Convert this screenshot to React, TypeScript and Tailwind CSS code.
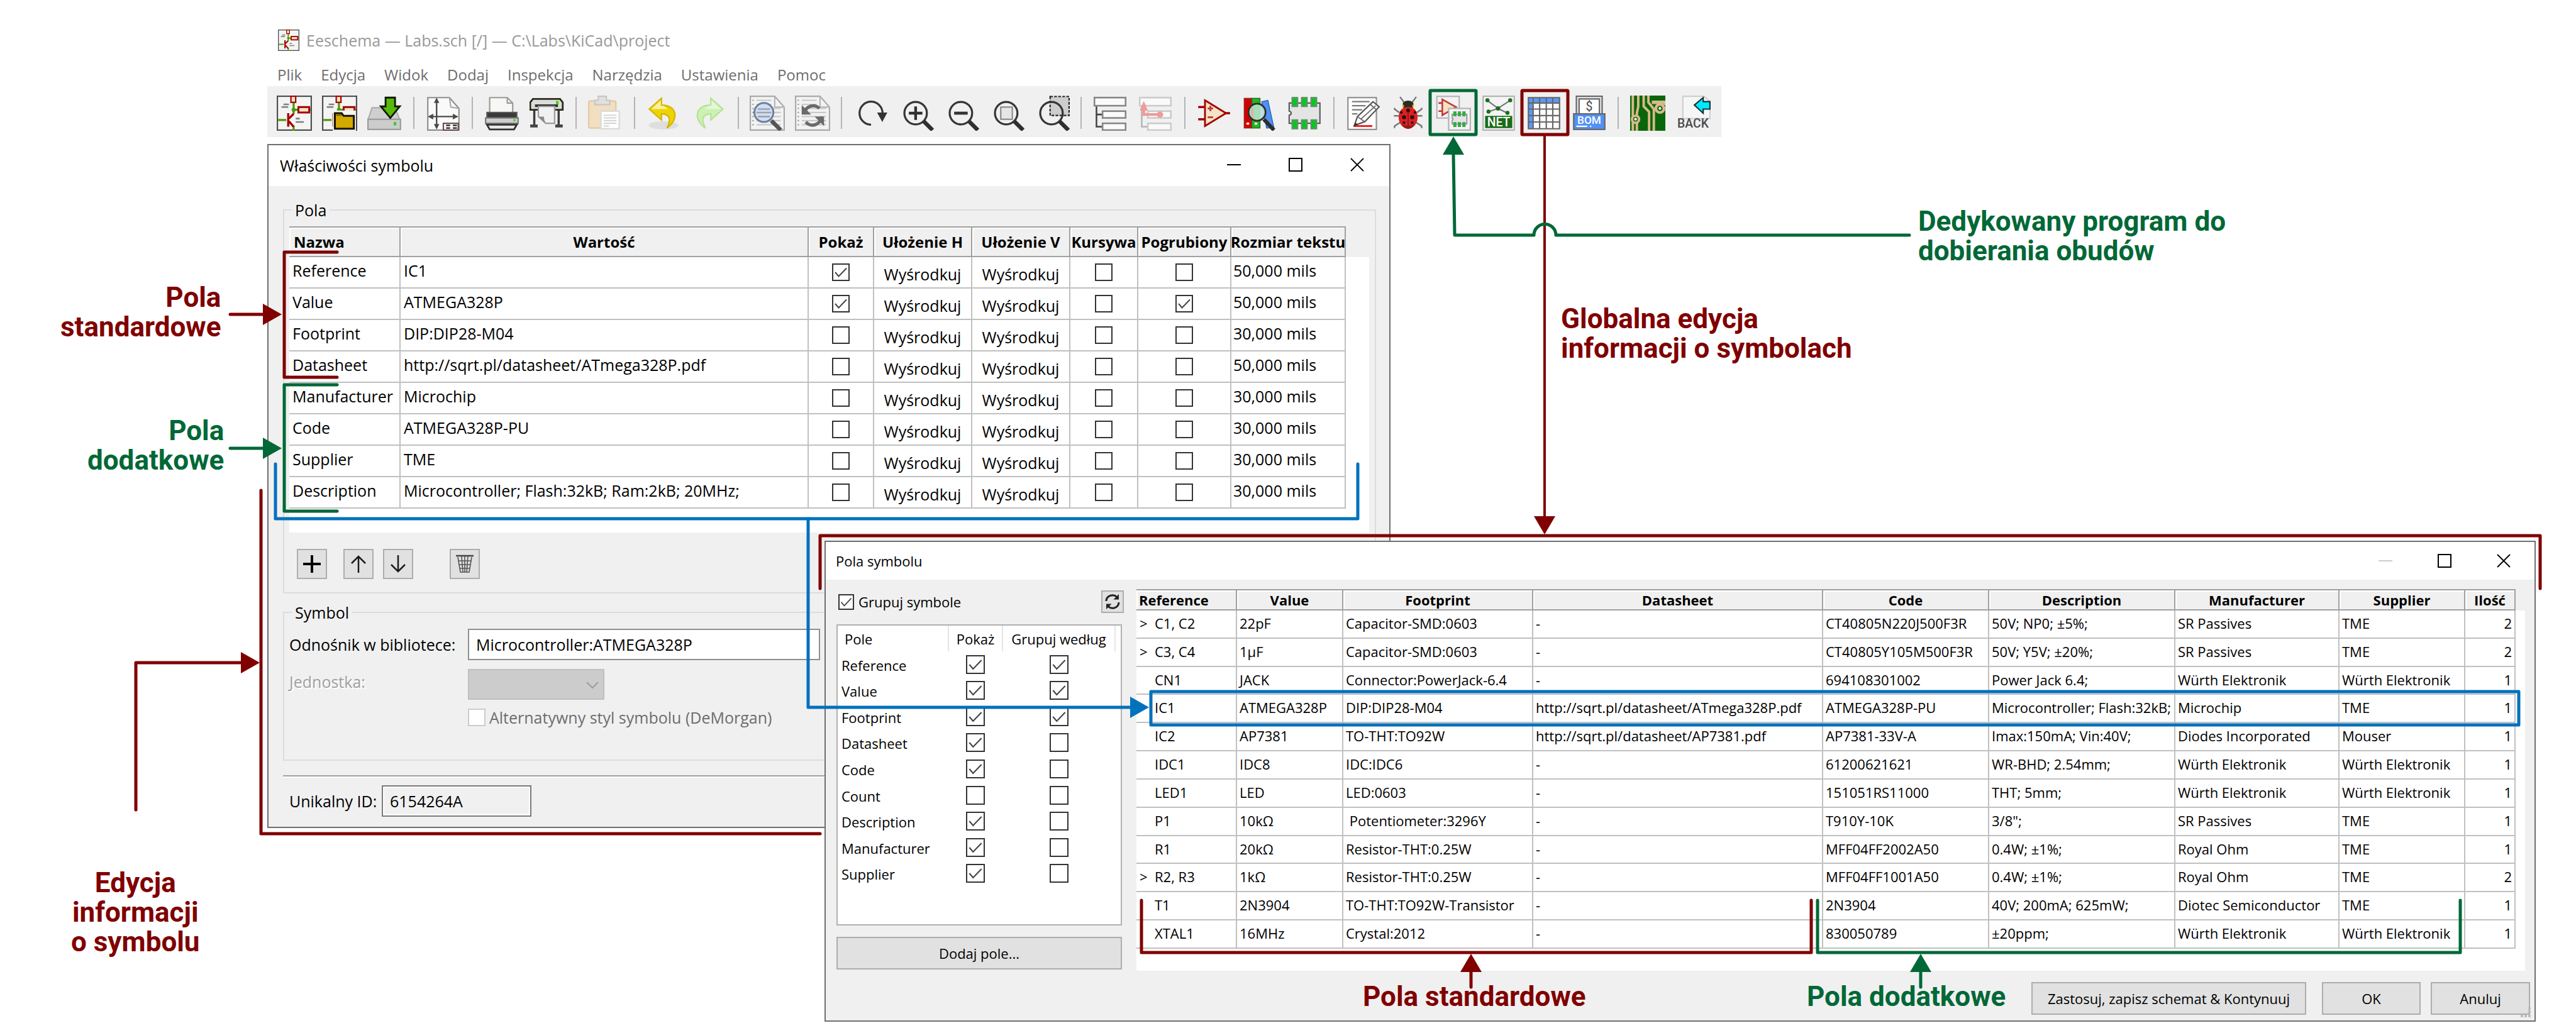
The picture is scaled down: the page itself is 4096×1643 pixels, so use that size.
import React from "react";

type P = { children?: React.ReactNode };

const Glyph = ({ children }: P) => (
  <svg viewBox="0 0 26 26" className="h-14 w-14 shrink-0" fill="none" aria-hidden="true">
    {children}
  </svg>
);

/* ---------- toolbar icons, drawn on a 26 x 26 pixel grid ---------- */

const SchematicArt = () => (
  <>
    <rect x=".5" y=".5" width="25" height="25" fill="#f4f4f4" stroke="#4d4d4d" />
    <path d="M12.5 5v8.500M12.500 22v4M1 18h6M12.500 10.500H25" stroke="#4e9a06" strokeWidth="1.500" />
    <rect x="10.500" y=".5" width="3.500" height="4.500" fill="#f5e3c5" stroke="#a40000" />
    <circle cx="12.500" cy="10.500" r="1.500" fill="#4e9a06" />
    <rect x="16" y="8.500" width="8" height="4" fill="#f5e3c5" stroke="#a40000" strokeWidth="1.400" />
    <path d="M8.500 13v10M9 17l3.500-3.500M9 19l3.500 4" stroke="#a40000" strokeWidth="1.600" />
    <path d="M5 6.500h4M3.500 8.500h5M14 17h3M14 19.500h6" stroke="#808080" strokeWidth="1.200" />
  </>
);
const LeaveSheet = () => (
  <Glyph>
    <SchematicArt />
  </Glyph>
);
const OpenProject = () => (
  <Glyph>
    <SchematicArt />
    <path d="M8 11h17v15H8z" fill="#f4f4f4" />
    <path d="M9.500 13h5l1.500 2h7.500v9.500h-14z" fill="#d4a900" stroke="#161200" strokeWidth="1.400" />
    <path d="M10.500 14.500h4" stroke="#7d6300" />
  </Glyph>
);
const Save = () => (
  <Glyph>
    <path d="M3.500 9h17L24 18H0.500z" fill="#cfcfcf" stroke="#adadad" />
    <rect x=".5" y="17.500" width="24" height="7.500" fill="#cccccc" stroke="#9a9a9a" />
    <rect x="19.500" y="19.500" width="2" height="2.500" fill="#32d132" />
    <path d="M13.500 1.500h7V8h3.500l-7 8.500L10 8h3.500z" fill="#58b90b" stroke="#0c1a00" strokeWidth="1.300" />
  </Glyph>
);
const PageSettings = () => (
  <Glyph>
    <path d="M1.500 1.500h16l7 8v16h-23z" fill="#fafafa" stroke="#8e8e8e" />
    <path d="M17.500 1.500l1 7 6 1" stroke="#a8a8a8" />
    <path d="M8 3v21M3 15.500h20" stroke="#4a4a4a" strokeWidth="1.100" />
    <path d="M8 1.500l2 4H6zM8 25l2-4H6zM1.500 15.500l4-2.200v4.400zM24 15.500l-4-2.200v4.400z" fill="#4a4a4a" />
    <rect x="13" y="20.500" width="11" height="5" fill="#fff" stroke="#6a4a4a" />
    <path d="M15 22h3M20 22h3M15 24h3M20 24h3" stroke="#222" />
  </Glyph>
);
const Print = () => (
  <Glyph>
    <path d="M4 1.500h13l4 4V13H4z" fill="#f7f7f5" stroke="#9b9b95" />
    <path d="M17 1.500v4h4" stroke="#9b9b95" />
    <rect x="2" y="12.500" width="22" height="4.500" fill="#3a3a3a" stroke="#555" />
    <rect x="1" y="16.500" width="24" height="4" fill="#cdcdcd" stroke="#777" />
    <rect x="21.500" y="17.500" width="1.500" height="1.500" fill="#4bd00b" />
    <path d="M2 21.500h22l-2 3.500H4z" fill="#e8e8e8" stroke="#333" strokeWidth="1.300" />
  </Glyph>
);
const Plot = () => (
  <Glyph>
    <path d="M3.500 9v14M21.500 9v14" stroke="#3c3c3c" strokeWidth="1.600" />
    <path d="M.5 22.500h5.500M19 22.500h5.500" stroke="#444" strokeWidth="2.200" />
    <path d="M2.500 2.500h20l2 2.500v5.500H.5V5z" fill="#dcdcdc" stroke="#2c2b1b" strokeWidth="1.300" />
    <rect x="19.500" y="4" width="2" height="2.500" fill="#4bd00b" />
    <path d="M4 6.500h17v2H4z" fill="#333" />
    <path d="M6.500 8h12v12.500H12l-5.500-5z" fill="#f1f1f1" stroke="#999" />
    <path d="M6.500 15.500h4l1 5z" fill="#888" />
  </Glyph>
);
const Paste = () => (
  <Glyph>
    <rect x="1" y="4" width="20" height="20" rx="1" fill="#f2dec0" stroke="#e4c9a2" />
    <path d="M8 .5h6v3h2.500v3.200H5.500V3.500H8z" fill="#e0e0e0" stroke="#c6c6c6" />
    <rect x="10" y="11.500" width="13.500" height="13" fill="#fff" stroke="#d8d8d8" />
    <path d="M12 14.500h9.500M12 16.500h9.500M12 18.500h9.500M12 20.500h9.500M12 22.500h4" stroke="#d6d6d6" />
  </Glyph>
);
const Undo = () => (
  <Glyph>
    <ellipse cx="13" cy="22" rx="11" ry="3" fill="#dedede" />
    <path d="M11.500 2L2.500 10l9 8v-4.500c5 0 8 3 4 10.500 9-6 8-17-4-17z" fill="#edd400" stroke="#d6b400" />
    <path d="M11 3.500L4 10h12c-1-1.500-2.500-2.500-5-2.600z" fill="#fbf0a0" />
  </Glyph>
);
const Redo = () => (
  <Glyph>
    <path d="M14.500 2l9 8-9 8v-4.500c-5 0-8 3-4 10.500-9-6-8-17 4-17z" fill="#cdf0b3" stroke="#b4e294" />
    <path d="M15 3.500L22 10H10c1-1.500 2.500-2.500 5-2.600z" fill="#e4f7d6" />
  </Glyph>
);
const Sheet = () => (
  <>
    <path d="M.5.5h18l7 8v17H.5z" fill="#f3f3f3" stroke="#a9a9a9" />
    <path d="M18.500.5v8h7" stroke="#b5b5b5" />
    <path d="M2.500 3v21" stroke="#9c9c9c" strokeDasharray="1 2" />
    <path d="M5 3.500h11M5 6.500h11M5 9.500h18M5 12.500h18M5 15.500h18M5 18.500h18M5 21.500h18" stroke="#c9c9c9" />
  </>
);
const Find = () => (
  <Glyph>
    <Sheet />
    <circle cx="10.500" cy="12.500" r="7" fill="#cfdffa" stroke="#6f7f99" strokeWidth="1.400" />
    <path d="M6 10h9M5 12.500h11M6 15.500h9" stroke="#a2a2a2" strokeWidth="1.200" />
    <path d="M16 18.500l7 7" stroke="#555" strokeWidth="3" />
  </Glyph>
);
const FindReplace = () => (
  <Glyph>
    <Sheet />
    <path d="M7 13a6.500 6.500 0 0 1 11-3.500M19.500 15.500a6.500 6.500 0 0 1-11.500 4" stroke="#6a6a6a" strokeWidth="2.400" />
    <path d="M5 7v7h7zM21.500 22.500v-7h-7z" fill="#6a6a6a" />
  </Glyph>
);
const Refresh = () => (
  <Glyph>
    <path d="M13 21.500a8.500 8.500 0 1 1 8.500-8.500" stroke="#363636" strokeWidth="1.500" />
    <path d="M17.500 12.500h7.500l-3.700 7z" fill="#333" />
  </Glyph>
);
const Lens = ({ children }: P) => (
  <Glyph>
    {children}
    <circle cx="12.500" cy="13" r="8.300" stroke="#363636" strokeWidth="1.500" />
    <path d="M18.500 19l6.500 6.500" stroke="#2f2f2f" strokeWidth="3" />
  </Glyph>
);
const ZoomIn = () => (
  <Lens>
    <path d="M7.500 13h10M12.500 8v10" stroke="#2f2f2f" strokeWidth="2" />
  </Lens>
);
const ZoomOut = () => (
  <Lens>
    <path d="M7.500 13h10" stroke="#333" strokeWidth="2.200" />
  </Lens>
);
const ZoomFit = () => (
  <Lens>
    <rect x="8.500" y="8.500" width="8.500" height="9" fill="#e6e6e6" stroke="#8a8a8a" />
  </Lens>
);
const ZoomArea = () => (
  <Lens>
    <rect x="11.500" y=".7" width="14" height="14" fill="#cdcdcd" stroke="#222" strokeDasharray="2 1" />
  </Lens>
);
const Hierarchy = () => (
  <Glyph>
    <path d="M3 8v15h4M3 14h4" stroke="#444" strokeWidth="1.200" />
    <g fill="#fafafa" stroke="#868686" strokeWidth="1.200">
      <rect x="1.500" y="1.500" width="23" height="6" />
      <rect x="7.500" y="11.500" width="17" height="5" />
      <rect x="7.500" y="20.500" width="17" height="5" />
    </g>
  </Glyph>
);
const SheetUp = () => (
  <Glyph>
    <path d="M3 8v15h4M3 14h4" stroke="#b5b5b5" strokeWidth="1.200" />
    <g fill="#fafafa" stroke="#cbcbcb" strokeWidth="1.200">
      <rect x="1.500" y="1.500" width="23" height="6" />
      <rect x="7.500" y="11.500" width="17" height="5" />
      <rect x="7.500" y="20.500" width="17" height="5" />
    </g>
    <path d="M4.500 9v5H17" stroke="#f09a9a" strokeWidth="2" />
    <path d="M4.500 4l3 7h-6z" fill="#f09a9a" />
    <circle cx="16.500" cy="14" r="2.300" fill="#f09a9a" />
  </Glyph>
);
const SymbolEditor = () => (
  <Glyph>
    <path d="M1.500 8.500h5M1.500 17.500h5M21 13h4" stroke="#a40000" strokeWidth="1.600" />
    <path d="M6.500 3.500L22 13 6.500 22.500z" fill="#f5e3c5" stroke="#a40000" strokeWidth="1.300" />
    <path d="M8.500 9.500h4M10.500 7.500v4M8.500 16h4" stroke="#b84444" strokeWidth="1.400" />
  </Glyph>
);
const LibraryBrowser = () => (
  <Glyph>
    <rect x="2" y="2" width="5.500" height="22" fill="#d40000" stroke="#8e2a2a" strokeWidth=".6" />
    <rect x="7.700" y="2" width="6" height="22" fill="#25b225" stroke="#1f6a1f" strokeWidth=".6" />
    <path d="M15 4.500l4.500-1L24 24h-5.500z" fill="#4f92f4" stroke="#1d5dc0" strokeWidth=".6" />
    <path d="M4.700 20v1.500M10.700 20v1.500" stroke="#fff" strokeWidth="2" />
    <circle cx="11.500" cy="12.300" r="6.300" fill="#a5dfb3" stroke="#2d2d2d" strokeWidth="1.300" />
    <path d="M7 12a4.500 4.500 0 0 1 2-4v9a5 5 0 0 1-2-5z" fill="#dcb0b0" />
    <path d="M14 8a5.500 5.500 0 0 1 0 9z" fill="#c9d8f5" />
    <path d="M16.500 17.500l7.500 8" stroke="#2d2d2d" strokeWidth="2.800" />
  </Glyph>
);
const IcArt = () => (
  <>
    <path d="M1.800 5.500h22.700v15H1.800v-6c2-.5 2-2.500 0-3z" fill="#e4e4e4" stroke="#5a5a5a" />
    <g fill="#09c622" stroke="#64906a">
      <rect x="4" y="1.500" width="4" height="6.500" />
      <rect x="11" y="1.500" width="4" height="6.500" />
      <rect x="18" y="1.500" width="4" height="6.500" />
      <rect x="4" y="18" width="4" height="6.500" />
      <rect x="11" y="18" width="4" height="6.500" />
      <rect x="18" y="18" width="4" height="6.500" />
    </g>
  </>
);
const FootprintEditor = () => (
  <Glyph>
    <IcArt />
  </Glyph>
);
const Annotate = () => (
  <Glyph>
    <rect x="2" y="1.500" width="21" height="23.500" fill="#fff" stroke="#8f8f8f" />
    <path d="M5 4.500h13M5 7.500h10M5 10.500h7.500M5 13.500h4" stroke="#7a7a7a" />
    <path d="M6 22.500h14" stroke="#f40000" strokeWidth="1.200" />
    <path d="M6.800 22l2.200-6.500L20.500 4.500l4.500 3.800-10.500 11z" fill="#fff" stroke="#555" />
    <path d="M9 15.500l5.500 4M18.500 6.500l4.500 4M11.500 17.500l11-10" stroke="#666" strokeWidth=".8" />
    <path d="M6.300 22.800l1-3 2 1.500z" fill="#333" />
  </Glyph>
);
const Bug = () => (
  <Glyph>
    <path d="M10 5L7 1M16 5l3-4M6.500 12.500L3 10v-1M19.500 12.500L23 10v-1M6 15H2.500M20 15h3.500M7 20l-4 2.500V24M19 20l4 2.500V24" stroke="#777" strokeWidth="1.100" />
    <ellipse cx="13" cy="7" rx="4.300" ry="3.300" fill="#2b2b2b" />
    <path d="M8.700 5.500l1.500 2.500-1.500 1zM17.300 5.500L15.800 8l1.500 1z" fill="#e3c800" />
    <path d="M13 8.500c5 0 7 3.500 7 7.500 0 5-3.500 8.500-7 8.500S6 21 6 16c0-4 2-7.500 7-7.500z" fill="#dc2121" />
    <path d="M8 21c3 1.500 7 1.500 10 0-1.500 2.500-3 3.500-5 3.500S9.500 23.500 8 21z" fill="#8e2020" />
    <path d="M13 9.500v14" stroke="#7a1515" strokeWidth=".7" />
    <g fill="#2b1010">
      <circle cx="13" cy="11" r="1.400" />
      <circle cx="10" cy="16" r="1.500" />
      <circle cx="16" cy="16" r="1.500" />
      <circle cx="8" cy="12.500" r="1" />
      <circle cx="18" cy="12.500" r="1" />
      <circle cx="10" cy="20" r="1" />
      <circle cx="16" cy="20" r="1" />
    </g>
  </Glyph>
);
const AssignFootprints = () => (
  <Glyph>
    <rect x=".8" y=".6" width="16.500" height="16" fill="#f3f3f3" stroke="#b3b3b3" />
    <path d="M2 5.500h3M2 11.500h3" stroke="#bf3030" strokeWidth="1.200" />
    <path d="M4.800 2.800L15 8.500 4.800 14.500z" fill="#f5e3c5" stroke="#c23b3b" strokeWidth="1.200" />
    <rect x="9.500" y="9.500" width="16" height="16" fill="#f3f3f3" stroke="#b3b3b3" />
    <g transform="translate(11.200 11.200) scale(.48)">
      <IcArt />
    </g>
  </Glyph>
);
const Netlist = () => (
  <Glyph>
    <rect x="1.500" y=".5" width="23" height="25" fill="#f4f4f4" stroke="#b3b3b3" />
    <path d="M4.500 3.500l8 6M21.500 3.500l-9 6M5.500 12l7-2.500 7 3.500" stroke="#777" />
    <g fill="#187018">
      <circle cx="4.700" cy="3.500" r="1.500" />
      <circle cx="21.500" cy="3.500" r="1.500" />
      <circle cx="12.500" cy="9.500" r="1.600" />
      <circle cx="5.500" cy="11.800" r="1.500" />
      <circle cx="19.500" cy="12.800" r="1.500" />
    </g>
    <rect x="3" y="15" width="20" height="9" fill="#186d18" />
    <text x="13" y="22.800" textAnchor="middle" fontFamily="Roboto, sans-serif" fontSize="9" fontWeight="500" fill="#fff">NET</text>
  </Glyph>
);
const FieldsTable = () => (
  <Glyph>
    <rect x="1.500" y="1.500" width="23" height="23" fill="#fff" />
    <path d="M1.500 1.500h23v4h-23zM1.500 5h3.500v19.500H1.500z" fill="#5b99fb" />
    <path d="M1.500 1.500h23v23h-23zM5 1.500v23M9.800 1.500v23M14.700 1.500v23M19.500 1.500v23M1.500 5.500h23M1.500 10h23M1.500 14.800h23M1.500 19.500h23" stroke="#666" />
  </Glyph>
);
const Bom = () => (
  <Glyph>
    <rect x="3.500" y=".5" width="19" height="14" fill="#e8e8e8" stroke="#666" />
    <rect x="5.500" y="2.500" width="15" height="12" fill="#fff" stroke="#666" />
    <text x="13" y="11" textAnchor="middle" fontFamily="Roboto, sans-serif" fontSize="9" fill="#444">$</text>
    <rect x="1.500" y="13.500" width="23" height="11.500" fill="#5291f5" stroke="#666" />
    <text x="13" y="21" textAnchor="middle" fontFamily="Roboto, sans-serif" fontSize="8" fontWeight="500" fill="#fff">BOM</text>
    <path d="M3.500 22.700h8M13.500 22.700h1" stroke="#fff" />
  </Glyph>
);
const Pcb = () => (
  <Glyph>
    <rect width="26" height="26" fill="#0a660a" />
    <path d="M2 0v26M6 0v8l-1 5v13M10 0v8l4 4v14M13.500 0v5l4 5v16" stroke="#d9b98a" strokeWidth="1.800" />
    <path d="M16 5h10v2M20 10h3" stroke="#d9b98a" strokeWidth="2.500" />
    <circle cx="22" cy="9.500" r="3" fill="#0a660a" stroke="#d9b98a" strokeWidth="2" />
    <circle cx="4" cy="17.500" r="2.600" fill="#0a660a" stroke="#d9b98a" strokeWidth="1.800" />
    <circle cx="22" cy="9.500" r="1" fill="#fff" />
    <circle cx="4" cy="17.500" r="1" fill="#fff" />
  </Glyph>
);
const Back = () => (
  <Glyph>
    <path d="M5.500.5H21l4.500 4V17h-20z" fill="#f6f6f6" stroke="#cfcfcf" />
    <path d="M20.500 1.500v3H25.500v5.500h-5v3L14 7z" fill="#00eaff" stroke="#12343a" />
    <text x="13" y="23.800" textAnchor="middle" fontFamily="Roboto, sans-serif" fontSize="9" fontWeight="500" fill="#4a4a4a">BACK</text>
  </Glyph>
);

const toolGroups: [string, () => React.ReactElement][][] = [
  [["Nowy schemat", LeaveSheet], ["Otwórz schemat", OpenProject], ["Zapisz", Save]],
  [["Ustawienia strony", PageSettings]],
  [["Drukuj", Print], ["Rysuj", Plot]],
  [["Wklej", Paste]],
  [["Cofnij", Undo], ["Ponów", Redo]],
  [["Znajdź", Find], ["Znajdź i zamień", FindReplace]],
  [["Odśwież", Refresh], ["Powiększ", ZoomIn], ["Pomniejsz", ZoomOut], ["Dopasuj widok", ZoomFit], ["Powiększ obszar", ZoomArea]],
  [["Hierarchia", Hierarchy], ["Arkusz nadrzędny", SheetUp]],
  [["Edytor symboli", SymbolEditor], ["Biblioteki", LibraryBrowser], ["Edytor footprintów", FootprintEditor]],
  [["Numeracja", Annotate], ["Kontrola ERC", Bug], ["Przypisz footprinty", AssignFootprints], ["Lista sieci", Netlist], ["Pola symboli", FieldsTable], ["BOM", Bom]],
  [["Edytor PCB", Pcb], ["Wstecz", Back]],
];

/* ---------- shared controls ---------- */

const Tick = ({ label, on, size }: { label: string; on?: boolean; size: "sm" | "md" | "lg" }) => (
  <span className={`relative inline-block align-top ${size === "sm" ? "size-[25px]" : size === "md" ? "size-7" : "size-[30px]"}`}>
    <input type="checkbox" aria-label={label} defaultChecked={on} className="block size-full appearance-none border-2 border-[#333] bg-white" />
    {on && (
      <svg viewBox="0 0 28 28" className="pointer-events-none absolute inset-0 size-full" fill="none" aria-hidden="true">
        <path d="M5 14l5.500 6.500L23 7.500" stroke="#444" strokeWidth="2" />
      </svg>
    )}
  </span>
);

const WindowButtons = ({ dimMin, className }: { dimMin?: boolean; className: string }) => (
  <div className={`flex items-center ${className}`}>
    <button aria-label="Minimalizuj" className="flex size-[22px] items-center">
      <span className={`h-[2px] w-full ${dimMin ? "bg-[#ccc]" : "bg-black"}`} />
    </button>
    <button aria-label="Maksymalizuj" className="size-[22px] border-2 border-black" />
    <button aria-label="Zamknij" className="size-[22px]">
      <svg viewBox="0 0 22 22" className="size-full" aria-hidden="true">
        <path d="M1 1l20 20M21 1L1 21" stroke="#000" strokeWidth="1.800" />
      </svg>
    </button>
  </div>
);

/* ---------- main window ---------- */

const MainWindow = () => (
  <header className="ml-[425px] w-[2312px] pt-[47px]">
    <div className="flex h-[34px] items-center gap-[11px] pl-[17px] text-[25px] leading-8 text-[#999]">
      <svg viewBox="0 0 26 26" className="size-[34px]" fill="none" aria-hidden="true">
        <SchematicArt />
      </svg>
      <h1>Eeschema — Labs.sch [/] — C:\Labs\KiCad\project</h1>
    </div>
    <nav className="mt-[22px] flex h-[34px] gap-[30px] pl-4 text-2xl leading-8 text-[#6e6e6e]">
      {["Plik", "Edycja", "Widok", "Dodaj", "Inspekcja", "Narzędzia", "Ustawienia", "Pomoc"].map((m) => (
        <button key={m} className="h-8">{m}</button>
      ))}
    </nav>
    <div role="toolbar" aria-label="Narzędzia" className="flex h-[81px] items-center justify-between bg-[#f0f0f0] pl-[7px] pr-[9px] pt-1">
      {toolGroups.map((g, i) => (
        <React.Fragment key={i}>
          {i > 0 && <span className="h-[51px] w-[2px] bg-[#b4b4b4]" />}
          <div className="flex">
            {g.map(([name, Icon]) => (
              <button key={name} aria-label={name} className="flex w-[72px] justify-center">
                <Icon />
              </button>
            ))}
          </div>
        </React.Fragment>
      ))}
    </div>
  </header>
);

/* ---------- symbol properties dialog ---------- */

type Field = [string, string, boolean, boolean, string];
const fields: Field[] = [
  ["Reference", "IC1", true, false, "50,000 mils"],
  ["Value", "ATMEGA328P", true, true, "50,000 mils"],
  ["Footprint", "DIP:DIP28-M04", false, false, "30,000 mils"],
  ["Datasheet", "http://sqrt.pl/datasheet/ATmega328P.pdf", false, false, "50,000 mils"],
  ["Manufacturer", "Microchip", false, false, "30,000 mils"],
  ["Code", "ATMEGA328P-PU", false, false, "30,000 mils"],
  ["Supplier", "TME", false, false, "30,000 mils"],
  ["Description", "Microcontroller; Flash:32kB; Ram:2kB; 20MHz;", false, false, "30,000 mils"],
];

const headCell = "overflow-hidden whitespace-nowrap border-y-2 border-r-2 border-[#a0a0a0] p-0 font-bold shadow-[inset_2px_2px_0_#fff]";
const bodyCell = "overflow-hidden whitespace-nowrap border-b-2 border-r-2 border-[#c0c0c0] bg-white p-0 align-top";
const squareButton = "flex items-center justify-center border-2 border-[#adadad] bg-[#e1e1e1]";

const PropertiesDialog = () => (
  <section aria-label="Właściwości symbolu" className="absolute left-[425px] top-[229px] w-[1786px] border-2 border-[#6f6f6f] bg-[#f0f0f0] text-[25px] leading-8">
    <div className="flex h-[65px] items-center justify-between bg-white pl-[18px] pr-[40px]">
      <h2 className="pb-[2px]">Właściwości symbolu</h2>
      <WindowButtons className="gap-[76px] pb-1" />
    </div>
    <div className="pb-4 pl-[23px] pr-[21px] pt-[22px]">
      <fieldset className="border-2 border-[#dcdcdc] pb-[21px] pl-2 pr-[9px]">
        <legend className="ml-1 px-[5px]">Pola</legend>
        <div className="mt-[10px] h-[487px] bg-white">
          <table className="w-full table-fixed border-separate border-spacing-0">
            <colgroup>
              <col className="w-[177px]" />
              <col />
              <col className="w-[104px]" />
              <col className="w-[156px]" />
              <col className="w-[156px]" />
              <col className="w-[108px]" />
              <col className="w-[148px]" />
              <col className="w-[182px]" />
              <col className="w-[37px]" />
            </colgroup>
            <thead className="text-2xl leading-8">
              <tr className="h-[49px] bg-[#f0f0f0]">
                <th className={`${headCell} pl-[7px] text-left`}>Nazwa</th>
                {["Wartość", "Pokaż", "Ułożenie H", "Ułożenie V", "Kursywa", "Pogrubiony", "Rozmiar tekstu"].map((h) => (
                  <th key={h} className={headCell}>
                    <span className="flex justify-center">{h}</span>
                  </th>
                ))}
                <td />
              </tr>
            </thead>
            <tbody>
              {fields.map(([name, value, show, bold, size]) => (
                <tr key={name} className="h-[50px]">
                  <td className={`${bodyCell} pl-[5px] pt-[5px]`}>{name}</td>
                  <td className={`${bodyCell} pl-[5px] pt-[5px]`}>{value}</td>
                  <td className={`${bodyCell} pt-[10px] text-center`}><Tick size="md" label={`Pokaż ${name}`} on={show} /></td>
                  <td className={`${bodyCell} pt-[11px] text-center`}>Wyśrodkuj</td>
                  <td className={`${bodyCell} pt-[11px] text-center`}>Wyśrodkuj</td>
                  <td className={`${bodyCell} pt-[10px] text-center`}><Tick size="md" label={`Kursywa ${name}`} /></td>
                  <td className={`${bodyCell} pt-[10px] text-center`}><Tick size="md" label={`Pogrubiony ${name}`} on={bold} /></td>
                  <td className={`${bodyCell} pl-[3px] pt-[5px]`}>{size}</td>
                  <td />
                </tr>
              ))}
            </tbody>
          </table>
        </div>
        <div className="mt-[26px] flex pl-3">
          <button aria-label="Dodaj pole" className={`${squareButton} size-12`}>
            <svg viewBox="0 0 28 28" className="size-7"><path d="M14 0v28M0 14h28" stroke="#000" strokeWidth="4" /></svg>
          </button>
          <button aria-label="W górę" className={`${squareButton} ml-[26px] size-12`}>
            <svg viewBox="0 0 28 28" className="size-7" fill="none"><path d="M14 28V2M3 13L14 2l11 11" stroke="#1a1a1a" strokeWidth="2.500" /></svg>
          </button>
          <button aria-label="W dół" className={`${squareButton} ml-[15px] size-12`}>
            <svg viewBox="0 0 28 28" className="size-7" fill="none"><path d="M14 0v26M3 15l11 11 11-11" stroke="#1a1a1a" strokeWidth="2.500" /></svg>
          </button>
          <button aria-label="Usuń pole" className={`${squareButton} ml-[58px] size-12`}>
            <svg viewBox="0 0 30 30" className="size-[30px]" fill="none">
              <path d="M1 2h28" stroke="#444" strokeWidth="2.500" />
              <path d="M4 4l4 24h14l4-24M10 3l2 25M15 3v25M20 3l-2 25M5 10h20M6 16h18M7 22h16" stroke="#555" strokeWidth="1.600" />
            </svg>
          </button>
        </div>
      </fieldset>
      <fieldset className="mt-[14px] border-2 border-[#dcdcdc] pb-[53px] pl-2">
        <legend className="ml-1 px-[5px]">Symbol</legend>
        <div className="mt-[10px] grid grid-cols-[284px_1fr] gap-y-[14px]">
          <label htmlFor="lib" className="self-center">Odnośnik w bibliotece:</label>
          <input id="lib" defaultValue="Microcontroller:ATMEGA328P" className="h-[50px] w-[560px] border-2 border-[#8f8f8f] bg-white pl-[11px]" />
          <label htmlFor="unit" className="pt-1 text-[#a0a0a0] [text-shadow:2px_2px_0_#fff]">Jednostka:</label>
          <div className="relative w-[217px]">
            <select id="unit" disabled className="block h-[49px] w-full appearance-none border-2 border-[#bfbfbf] bg-[#ccc]" />
            <svg viewBox="0 0 20 12" className="pointer-events-none absolute right-[9px] top-5 h-3 w-5" fill="none" aria-hidden="true">
              <path d="M1 1l9 9 9-9" stroke="#9d9d9d" strokeWidth="2" />
            </svg>
          </div>
          <div className="col-start-2 flex h-7 items-center gap-[6px] text-[#6d6d6d]">
            <input id="alt" type="checkbox" disabled className="size-7 appearance-none border-2 border-[#ccc] bg-white" />
            <label htmlFor="alt">Alternatywny styl symbolu (DeMorgan)</label>
          </div>
        </div>
      </fieldset>
      <hr className="mt-[23px] h-1 border-b-2 border-t-2 border-b-white border-t-[#a0a0a0]" />
      <div className="mt-[12px] flex items-center pl-[10px]">
        <label htmlFor="uid" className="w-[147px]">Unikalny ID:</label>
        <input id="uid" readOnly defaultValue="6154264A" className="h-[50px] w-[238px] border-2 border-[#7a7a7a] bg-[#f0f0f0] pl-[11px] shadow-[inset_0_0_0_2px_#fff]" />
      </div>
    </div>
  </section>
);

/* ---------- symbol fields dialog ---------- */

const listRows: [string, boolean, boolean][] = [
  ["Reference", true, true],
  ["Value", true, true],
  ["Footprint", true, true],
  ["Datasheet", true, false],
  ["Code", true, false],
  ["Count", false, false],
  ["Description", true, false],
  ["Manufacturer", true, false],
  ["Supplier", true, false],
];

const parts: string[][] = [
  ["C1, C2", "22pF", "Capacitor-SMD:0603", "-", "CT40805N220J500F3R", "50V; NP0; ±5%;", "SR Passives", "TME", "2"],
  ["C3, C4", "1µF", "Capacitor-SMD:0603", "-", "CT40805Y105M500F3R", "50V; Y5V; ±20%;", "SR Passives", "TME", "2"],
  ["CN1", "JACK", "Connector:PowerJack-6.4", "-", "694108301002", "Power Jack 6.4;", "Würth Elektronik", "Würth Elektronik", "1"],
  ["IC1", "ATMEGA328P", "DIP:DIP28-M04", "http://sqrt.pl/datasheet/ATmega328P.pdf", "ATMEGA328P-PU", "Microcontroller; Flash:32kB;", "Microchip", "TME", "1"],
  ["IC2", "AP7381", "TO-THT:TO92W", "http://sqrt.pl/datasheet/AP7381.pdf", "AP7381-33V-A", "Imax:150mA; Vin:40V;", "Diodes Incorporated", "Mouser", "1"],
  ["IDC1", "IDC8", "IDC:IDC6", "-", "61200621621", "WR-BHD; 2.54mm;", "Würth Elektronik", "Würth Elektronik", "1"],
  ["LED1", "LED", "LED:0603", "-", "151051RS11000", "THT; 5mm;", "Würth Elektronik", "Würth Elektronik", "1"],
  ["P1", "10kΩ", " Potentiometer:3296Y", "-", "T910Y-10K", '3/8";', "SR Passives", "TME", "1"],
  ["R1", "20kΩ", "Resistor-THT:0.25W", "-", "MFF04FF2002A50", "0.4W; ±1%;", "Royal Ohm", "TME", "1"],
  ["R2, R3", "1kΩ", "Resistor-THT:0.25W", "-", "MFF04FF1001A50", "0.4W; ±1%;", "Royal Ohm", "TME", "2"],
  ["T1", "2N3904", "TO-THT:TO92W-Transistor", "-", "2N3904", "40V; 200mA; 625mW;", "Diotec Semiconductor", "TME", "1"],
  ["XTAL1", "16MHz", "Crystal:2012", "-", "830050789", "±20ppm;", "Würth Elektronik", "Würth Elektronik", "1"],
];

const pushButton = "h-[52px] border-2 border-[#adadad] bg-[#e1e1e1]";

const FieldsDialog = () => (
  <section aria-label="Pola symbolu" className="absolute left-[1311px] top-[860px] w-[2721px] border-2 border-[#6f6f6f] bg-[#f0f0f0] text-[22px] leading-[30px]">
    <div className="flex h-[60px] items-center justify-between bg-white pl-4 pr-[38px]">
      <h2>Pola symbolu</h2>
      <WindowButtons dimMin className="gap-[72px] pb-px" />
    </div>
    <div className="flex gap-[23px] pl-[17px] pr-[15px] pt-[15px]">
      <div className="w-[454px] shrink-0">
        <div className="flex items-center pl-[3px] pt-[2px]">
          <Tick size="sm" label="Grupuj symbole" on />
          <span className="pl-[7px]">Grupuj symbole</span>
          <button aria-label="Odśwież" className={`${squareButton} -mr-[3px] ml-auto size-9`}>
            <svg viewBox="0 0 26 26" className="size-[26px]" fill="none">
              <path d="M3 12a10 9.500 0 0 1 17-6.500M23 14a10 9.500 0 0 1-17 6.500" stroke="#222" strokeWidth="3" />
              <path d="M23 1v8.500h-8.500zM3 25v-8.500h8.500z" fill="#222" />
            </svg>
          </button>
        </div>
        <div className="mt-[18px] h-[479px] border-2 border-[#b0b0b0] bg-white">
          <table className="h-[415px] w-full table-fixed border-separate border-spacing-0">
            <colgroup>
              <col className="w-[177px]" />
              <col className="w-[86px]" />
              <col className="w-[179px]" />
              <col />
            </colgroup>
            <thead>
              <tr className="h-[41px]">
                <th className="border-r-2 border-[#e5e5e5] p-0 pl-[11px] text-left font-normal">Pole</th>
                <th className="whitespace-nowrap border-r-2 border-[#e5e5e5] p-0 font-normal">Pokaż</th>
                <th className="whitespace-nowrap border-r-2 border-[#e5e5e5] p-0 font-normal">Grupuj według</th>
                <td />
              </tr>
            </thead>
            <tbody>
              {listRows.map(([name, show, group]) => (
                <tr key={name}>
                  <td className="p-0 pl-[6px] pt-[2px]">{name}</td>
                  <td className="p-0 pr-[2px] text-center"><Tick size="lg" label={`Pokaż ${name}`} on={show} /></td>
                  <td className="p-0 pr-[2px] text-center"><Tick size="lg" label={`Grupuj według ${name}`} on={group} /></td>
                  <td />
                </tr>
              ))}
            </tbody>
          </table>
        </div>
        <button className={`${pushButton} mt-[18px] w-full`}>Dodaj pole...</button>
      </div>
      <div className="h-[607px] grow bg-white">
        <table className="h-[572px] w-full table-fixed border-separate border-spacing-0">
          <colgroup>
            <col className="w-[160px]" />
            <col className="w-[169px]" />
            <col className="w-[302px]" />
            <col />
            <col className="w-[264px]" />
            <col className="w-[296px]" />
            <col className="w-[261px]" />
            <col className="w-[200px]" />
            <col className="w-[80px]" />
            <col className="w-[15px]" />
          </colgroup>
          <thead>
            <tr className="h-[34px] bg-[#f0f0f0]">
              {["Reference", "Value", "Footprint", "Datasheet", "Code", "Description", "Manufacturer", "Supplier", "Ilość"].map((h, i) => (
                <th key={h} className={`${headCell} ${i === 0 ? "pl-1 text-left" : "text-center"}`}>{h}</th>
              ))}
              <td />
            </tr>
          </thead>
          <tbody>
            {parts.map((r) => (
              <tr key={r[0]}>
                {r.map((c, i) =>
                  i === 0 ? (
                    <td key={i} className={`${bodyCell} pl-[5px] pt-[5px]`}>
                      <span className="inline-block w-6">{c.includes(",") ? ">" : ""}</span>
                      {c}
                    </td>
                  ) : (
                    <td key={i} className={`${bodyCell} whitespace-pre pt-[5px] ${i === 8 ? "pr-1 text-right" : "pl-1"}`}>{c}</td>
                  ),
                )}
                <td />
              </tr>
            ))}
          </tbody>
        </table>
      </div>
    </div>
    <div className="relative flex justify-end pb-[9px] pr-[7px] pt-[18px]">
      <button className={`${pushButton} mr-[25px] w-[437px]`}>Zastosuj, zapisz schemat &amp; Kontynuuj</button>
      <button className={`${pushButton} mr-4 w-[157px]`}>OK</button>
      <button className={`${pushButton} w-[158px]`}>Anuluj</button>
      <svg viewBox="0 0 18 18" className="absolute bottom-1 right-1 size-[18px]" fill="#bdbdbd" aria-hidden="true">
        <path d="M0 13h4v4H0zM6 13h4v4H6zM12 13h4v4h-4zM12 7h4v4h-4zM12 1h4v4h-4z" />
      </svg>
    </div>
  </section>
);

/* ---------- callouts ---------- */

const Connectors = () => (
  <svg viewBox="0 0 4096 1643" className="pointer-events-none absolute left-0 top-0 h-[1643px] w-[4096px] max-w-none" fill="none" strokeWidth="5" strokeLinecap="round" strokeLinejoin="round" aria-hidden="true">
    <g stroke="#800000">
      <path d="M536 401H452V600H536" />
      <path d="M366 500H420" />
      <path d="M415 780V1326H1304" />
      <path d="M216 1288V1054H386" />
      <path d="M1304 936V852H4039V936" />
      <path d="M2456 217V822" strokeWidth="4" />
      <path d="M1815 1432V1515H2880V1432" />
      <path d="M2339 1545V1570" />
      <rect x="2420" y="144" width="73" height="70" rx="1" />
    </g>
    <g stroke="#006837">
      <path d="M536 612H452V813H536" />
      <path d="M366 713H420" />
      <path d="M2311 245L2313 374H2439A17.500 17.500 0 0 1 2474 374H3036" />
      <path d="M2890 1432V1515H3912V1432" />
      <path d="M3054 1545V1570" />
      <rect x="2274" y="144" width="73" height="70" rx="1" />
    </g>
    <g stroke="#0071bc">
      <path d="M438 738V825H2159V738" />
      <path d="M1285 825V1125H1800" />
      <rect x="1830" y="1100" width="2175" height="53" />
    </g>
    <g fill="#800000">
      <path d="M418 483L448 500L418 517z" />
      <path d="M383 1037L413 1054L383 1071z" />
      <path d="M2439 821H2473L2456 850z" />
      <path d="M2322 1546H2356L2339 1517z" />
    </g>
    <g fill="#006837">
      <path d="M418 696L448 713L418 730z" />
      <path d="M2294 246H2328L2311 217z" />
      <path d="M3037 1546H3071L3054 1517z" />
    </g>
    <path d="M1797 1108L1827 1125L1797 1142z" fill="#0071bc" />
  </svg>
);

const note = "absolute whitespace-nowrap font-[Roboto,sans-serif] text-[44px] font-bold leading-[47px]";

export default function App() {
  return (
    <main className="relative min-h-screen w-full overflow-hidden bg-white font-['Open_Sans',sans-serif] text-black">
      <MainWindow />
      <PropertiesDialog />
      <FieldsDialog />
      <Connectors />
      <p className={`${note} left-[96px] top-[450px] text-right text-[#800000]`}>Pola<br />standardowe</p>
      <p className={`${note} left-[139px] top-[662px] text-right text-[#006837]`}>Pola<br />dodatkowe</p>
      <p className={`${note} left-[113px] top-[1381px] text-center text-[#800000]`}>Edycja<br />informacji<br />o symbolu</p>
      <p className={`${note} left-[3050px] top-[329px] text-[#006837]`}>Dedykowany program do<br />dobierania obudów</p>
      <p className={`${note} left-[2482px] top-[484px] text-[#800000]`}>Globalna edycja<br />informacji o symbolach</p>
      <p className={`${note} left-[2167px] top-[1562px] text-[#800000]`}>Pola standardowe</p>
      <p className={`${note} left-[2873px] top-[1562px] text-[#006837]`}>Pola dodatkowe</p>
    </main>
  );
}
